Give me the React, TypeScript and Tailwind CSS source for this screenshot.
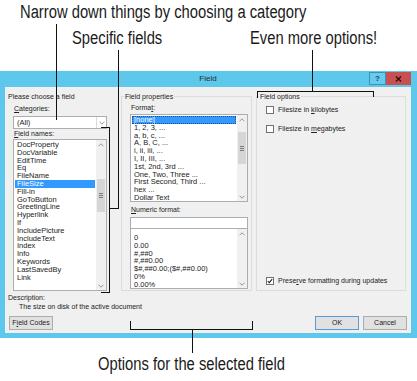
import { FC, ReactNode } from "react";

const ui = "font-['Liberation_Sans',Arial,sans-serif]";
const callout =
    "font-['Liberation_Sans',Arial,sans-serif] text-[18px] leading-[24px] text-[#1a1a1a] whitespace-nowrap";
// Liberation Sans squeezed to the width of a narrow face
const narrow = "inline-block origin-left scale-x-[0.82]";

const fieldNames = [
    "DocProperty",
    "DocVariable",
    "EditTime",
    "Eq",
    "FileName",
    "FileSize",
    "Fill-in",
    "GoToButton",
    "GreetingLine",
    "Hyperlink",
    "If",
    "IncludePicture",
    "IncludeText",
    "Index",
    "Info",
    "Keywords",
    "LastSavedBy",
    "Link",
];

const formats = [
    "[none]",
    "1, 2, 3, ...",
    "a, b, c, ...",
    "A, B, C, ...",
    "i, ii, iii, ...",
    "I, II, III, ...",
    "1st, 2nd, 3rd ...",
    "One, Two, Three ...",
    "First Second, Third ...",
    "hex ...",
    "Dollar Text",
];

const numeric = [
    "0",
    "0.00",
    "#,##0",
    "#,##0.00",
    "$#,##0.00;($#,##0.00)",
    "0%",
    "0.00%",
];

const Chevron: FC<{ up?: boolean }> = ({ up }) => (
    <svg width="6" height="4" viewBox="0 0 6 4">
        <path
            d={up ? "M0.5 3.3L3 0.8L5.5 3.3" : "M0.5 0.7L3 3.2L5.5 0.7"}
            fill="none"
            stroke="#8c8c8c"
            strokeWidth="0.9"
        />
    </svg>
);

const ScrollBar: FC<{ thumb?: string }> = ({ thumb }) => (
    <div className="w-[10px] h-full flex flex-col bg-[#f0f0f0]">
        <div className="h-[9px] flex items-center justify-center">
            <Chevron up />
        </div>
        <div className="flex-1">
            {thumb && (
                <div
                    className={`mx-auto w-[8px] bg-[#d6d6d6] flex flex-col items-center justify-center gap-[1px] ${thumb}`}
                >
                    <span className="w-[4px] h-px bg-[#7a7a7a]" />
                    <span className="w-[4px] h-px bg-[#7a7a7a]" />
                    <span className="w-[4px] h-px bg-[#7a7a7a]" />
                </div>
            )}
        </div>
        <div className="h-[9px] flex items-center justify-center">
            <Chevron />
        </div>
    </div>
);

interface ListProps {
    items: string[];
    selected?: number;
    focus?: boolean;
    thumb?: string;
    className: string;
    pad?: string;
}

const ListBox: FC<ListProps> = ({ items, selected, focus, thumb, className, pad }) => (
    <div className={`flex bg-white border border-[#abadb3] text-[7.5px] ${className}`}>
        <div className={`flex-1 min-w-0 px-[1px] ${pad ?? "pt-[1px]"}`}>
            {items.map((item, i) => (
                <div
                    key={item}
                    className={`h-[7.8px] leading-[7.8px] pl-[2px] whitespace-nowrap overflow-hidden ${
                        i === selected ? "bg-[#3399ff] text-white" : ""
                    } ${i === selected && focus ? "outline outline-1 outline-dotted outline-[#1f4f8a] -outline-offset-1" : ""}`}
                >
                    {item}
                </div>
            ))}
        </div>
        <ScrollBar thumb={thumb} />
    </div>
);

const CheckBox: FC<{ checked?: boolean; children: ReactNode; className?: string }> = ({
    checked,
    children,
    className,
}) => (
    <div className={`flex items-center gap-[4px] pl-[9px] h-[8px] ${className ?? ""}`}>
        <div className="w-[8px] h-[8px] border border-[#707070] bg-white flex items-center justify-center">
            {checked && (
                <svg width="6" height="6" viewBox="0 0 6 6">
                    <path d="M0.8 3.1L2.3 4.6L5.2 1.2" fill="none" stroke="#222" strokeWidth="1.1" />
                </svg>
            )}
        </div>
        <span className="leading-[8px]">{children}</span>
    </div>
);

const GroupLabel: FC<{ children: ReactNode }> = ({ children }) => (
    <div className="-mt-[5px] ml-[2px] w-fit px-[1px] h-[9px] leading-[9px] bg-[#f0f0f0]">
        {children}
    </div>
);

const Dialog: FC = () => (
    <div
        className={`mt-[21px] h-[267px] bg-[#5ec7ec] flex flex-col pl-[5px] pr-[6px] pb-[5px] text-[7px] text-[#222] ${ui}`}
    >
        <div className="h-[16px] flex">
            <div className="flex-1" />
            <div className="text-[8px] leading-[16px] text-[#2b2b2b]">Field</div>
            <div className="flex-1 flex justify-end pt-[1px]">
                <div className="w-[17px] h-[13px] border border-[#3b93bd] bg-[#67cbee] flex items-center justify-center text-[8px] font-bold text-[#1d3f66]">
                    ?
                </div>
                <div className="w-[25px] h-[13px] bg-[#c75050] flex items-center justify-center">
                    <svg width="7" height="6" viewBox="0 0 7 6">
                        <path d="M1 0.5L6 5.5M6 0.5L1 5.5" stroke="#2a1010" strokeWidth="1.3" />
                    </svg>
                </div>
            </div>
        </div>

        <div className="flex-1 bg-[#f0f0f0] flex flex-col pl-[3px] pr-[4px] pt-[5px]">
            <div className="flex h-[199px]">
                <div className="w-[110px] flex flex-col">
                    <div className="h-[9px] leading-[9px]">Please choose a field</div>
                    <div className="mt-[3px] pl-[6px] h-[9px] leading-[9px]">
                        <u>C</u>ategories:
                    </div>
                    <div className="mt-[3px] ml-[5px] w-[94px] h-[13px] bg-white border border-[#abadb3] flex text-[7.5px]">
                        <div className="flex-1 pl-[3px] leading-[11px]">(All)</div>
                        <div className="w-[10px] border-l border-[#dadada] flex items-center justify-center">
                            <Chevron />
                        </div>
                    </div>
                    <div className="pl-[6px] h-[9px] leading-[9px]">
                        <u>F</u>ield names:
                    </div>
                    <ListBox
                        items={fieldNames}
                        selected={5}
                        thumb="mt-[30px] h-[33px]"
                        className="mt-[1px] ml-[5px] w-[94px] h-[152px]"
                    />
                </div>

                <div className="w-[136px] pl-[3px] pr-[2px] pt-[4px] flex">
                    <div className="flex-1 border border-[#dcdcdc] flex flex-col">
                        <GroupLabel>Field properties</GroupLabel>
                        <div className="pl-[8px] pr-[3px] flex flex-col">
                            <div className="mt-[2px] pl-[1px] h-[9px] leading-[9px]">
                                Forma<u>t</u>:
                            </div>
                            <ListBox
                                items={formats}
                                selected={0}
                                focus
                                thumb="mt-[8px] h-[32px]"
                                className="mt-[2px] h-[88px]"
                            />
                            <div className="mt-[3px] pl-[1px] h-[9px] leading-[9px]">
                                <u>N</u>umeric format:
                            </div>
                            <div className="mt-[3px] h-[12px] bg-white border border-[#abadb3]" />
                            <ListBox
                                items={numeric}
                                pad="pt-[5px]"
                                className="h-[60px] border-t-0"
                            />
                        </div>
                    </div>
                </div>

                <div className="flex-1 pl-[2px] pr-[1px] pt-[4px] flex">
                    <div className="flex-1 border border-[#dcdcdc] flex flex-col">
                        <GroupLabel>Field options</GroupLabel>
                        <CheckBox className="mt-[5px]">
                            Filesize in <u>k</u>ilobytes
                        </CheckBox>
                        <CheckBox className="mt-[11px]">
                            Filesize in <u>m</u>egabytes
                        </CheckBox>
                        <CheckBox checked className="mt-auto mb-[5px]">
                            Prese<u>r</u>ve formatting during updates
                        </CheckBox>
                    </div>
                </div>
            </div>

            <div className="mt-[2px] h-[9px] leading-[9px]">Description:</div>
            <div className="pl-[11px] h-[9px] leading-[9px]">
                The size on disk of the active document
            </div>

            <div className="mt-[5px] h-[14px] flex">
                <div className="ml-[1px] w-[44px] h-full bg-[#e1e1e1] border border-[#adadad] flex items-center justify-center">
                    F<u>i</u>eld Codes
                </div>
                <div className="ml-auto w-[44px] h-full bg-[#e1e1e1] border border-[#5b9bd5] flex items-center justify-center">
                    OK
                </div>
                <div className="ml-[4px] w-[44px] h-full bg-[#e1e1e1] border border-[#adadad] flex items-center justify-center">
                    Cancel
                </div>
            </div>
        </div>
    </div>
);

// callout lines drawn over the dialog
const Callouts: FC = () => (
    <>
        <div className="absolute left-[56px] top-[24px] w-px h-[96px] bg-[#111]" />

        <div className="absolute left-[118px] top-[50px] w-px h-[159px] bg-[#111]" />
        <div className="absolute left-[109px] top-[208px] w-[10px] h-px bg-[#111]" />
        <div className="absolute left-[109px] top-[127px] w-px h-[166px] bg-[#111]" />
        <div className="absolute left-[101px] top-[127px] w-[9px] h-px bg-[#111]" />
        <div className="absolute left-[101px] top-[292px] w-[9px] h-px bg-[#111]" />

        <div className="absolute left-[312px] top-[50px] w-px h-[41px] bg-[#111]" />
        <div className="absolute left-[257px] top-[91px] w-[117px] h-px bg-[#111]" />
        <div className="absolute left-[257px] top-[91px] w-px h-[7px] bg-[#111]" />
        <div className="absolute left-[373px] top-[91px] w-px h-[6px] bg-[#111]" />

        <div className="absolute left-[130px] top-[329px] w-[123px] h-px bg-[#111]" />
        <div className="absolute left-[130px] top-[321px] w-px h-[8px] bg-[#111]" />
        <div className="absolute left-[252px] top-[321px] w-px h-[8px] bg-[#111]" />
        <div className="absolute left-[192px] top-[329px] w-px h-[24px] bg-[#111]" />
    </>
);

export default function App() {
    return (
        <div className="relative w-[417px] h-[381px] overflow-hidden bg-white">
            <div className={`${callout} h-[24px] pl-[20px]`}>
                <span className={narrow}>Narrow down things by choosing a category</span>
            </div>
            <div className={`${callout} mt-[2px] h-[24px] flex`}>
                <span className={`${narrow} ml-[72px] w-[178px]`}>Specific fields</span>
                <span className={narrow}>Even more options!</span>
            </div>
            <Dialog />
            <div className={`${callout} mt-[14px] h-[24px] pl-[98px]`}>
                <span className={narrow}>Options for the selected field</span>
            </div>
            <Callouts />
        </div>
    );
}
